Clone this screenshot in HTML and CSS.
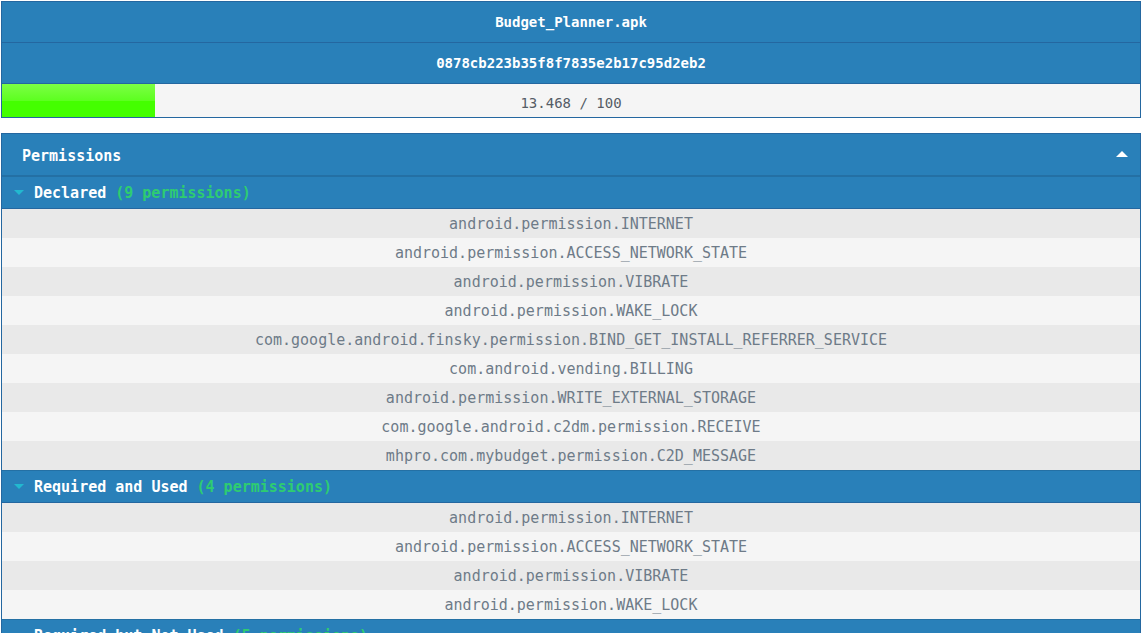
FILE: index.html
```html
<!DOCTYPE html>
<html>
<head>
<meta charset="utf-8">
<link rel="stylesheet" href="styles.css">
</head>
<body>
<div class="summary">
  <div class="sum-row">Budget_Planner.apk</div>
  <div class="sum-row">0878cb223b35f8f7835e2b17c95d2eb2</div>
  <div class="score">
    <div class="score-fill" style="width: 13.468%"></div>
    <div class="score-text">13.468 / 100</div>
  </div>
</div>

<div class="panel">
  <div class="panel-head">
    <span>Permissions</span>
    <span class="up"></span>
  </div>
  <div class="group-head"><span class="down"></span><b>Declared</b><span class="count">(9 permissions)</span></div>
  <ul class="perm-list">
    <li>android.permission.INTERNET</li>
    <li>android.permission.ACCESS_NETWORK_STATE</li>
    <li>android.permission.VIBRATE</li>
    <li>android.permission.WAKE_LOCK</li>
    <li>com.google.android.finsky.permission.BIND_GET_INSTALL_REFERRER_SERVICE</li>
    <li>com.android.vending.BILLING</li>
    <li>android.permission.WRITE_EXTERNAL_STORAGE</li>
    <li>com.google.android.c2dm.permission.RECEIVE</li>
    <li>mhpro.com.mybudget.permission.C2D_MESSAGE</li>
  </ul>
  <div class="group-head"><span class="down"></span><b>Required and Used</b><span class="count">(4 permissions)</span></div>
  <ul class="perm-list">
    <li>android.permission.INTERNET</li>
    <li>android.permission.ACCESS_NETWORK_STATE</li>
    <li>android.permission.VIBRATE</li>
    <li>android.permission.WAKE_LOCK</li>
  </ul>
  <div class="group-head"><span class="down"></span><b>Required but Not Used</b><span class="count">(5 permissions)</span></div>
</div>
</body>
</html>
```

FILE: styles.css
```css
html, body {
  margin: 0;
  padding: 0;
  background: #ffffff;
}
body {
  padding: 1px 1px 0 1px;
  font-family: "DejaVu Sans Mono", monospace;
  overflow: hidden;
}
.summary {
  border: 1px solid #2467a0;
  width: 1138px;
}
.sum-row {
  background: #2980b9;
  color: #ffffff;
  font-weight: bold;
  font-size: 14px;
  height: 40px;
  line-height: 40px;
  text-align: center;
  border-bottom: 1px solid #2467a0;
}
.score {
  position: relative;
  background: #f5f5f5;
  height: 33px;
}
.score-fill {
  position: absolute;
  left: 0;
  top: 0;
  bottom: 0;
  background: linear-gradient(to bottom, #7cff45 0%, #5dff20 50%, #44ff00 52%, #44ff00 100%);
}
.score-text {
  position: relative;
  text-align: center;
  line-height: 38px;
  font-size: 14px;
  color: #555d66;
}
.panel {
  margin-top: 15px;
  border: 1px solid #2467a0;
  width: 1138px;
  border-bottom: none;
}
.panel-head {
  background: #2980b9;
  color: #ffffff;
  font-weight: bold;
  font-size: 15px;
  height: 39px;
  padding-top: 2px;
  border-bottom: 1px solid #2470a4;
  display: flex;
  align-items: center;
  justify-content: space-between;
  padding-left: 20px;
  padding-right: 12px;
}
.up {
  width: 0;
  height: 0;
  border-left: 6px solid transparent;
  border-right: 6px solid transparent;
  border-bottom: 6px solid #ffffff;
  margin-top: -3px;
}
.group-head {
  background: #2980b9;
  color: #ffffff;
  font-size: 15px;
  height: 30px;
  padding-top: 1px;
  display: flex;
  align-items: center;
  padding-left: 12px;
  border-top: 1px solid #2470a4;
  border-bottom: 1px solid #2467a0;
}
.group-head b {
  font-weight: bold;
}
.down {
  width: 0;
  height: 0;
  border-left: 5px solid transparent;
  border-right: 5px solid transparent;
  border-top: 5px solid #22b8cf;
  margin-right: 10px;
  margin-top: -2px;
}
.count {
  color: #2ecc71;
  font-weight: bold;
  margin-left: 9px;
}
.perm-list {
  list-style: none;
  margin: 0;
  padding: 0;
}
.perm-list li {
  height: 28px;
  padding-top: 1px;
  line-height: 29px;
  text-align: center;
  font-size: 15px;
  color: #6e7b88;
  background: #f5f5f5;
}
.perm-list li:nth-child(odd) {
  background: #e9e9e9;
}
```
